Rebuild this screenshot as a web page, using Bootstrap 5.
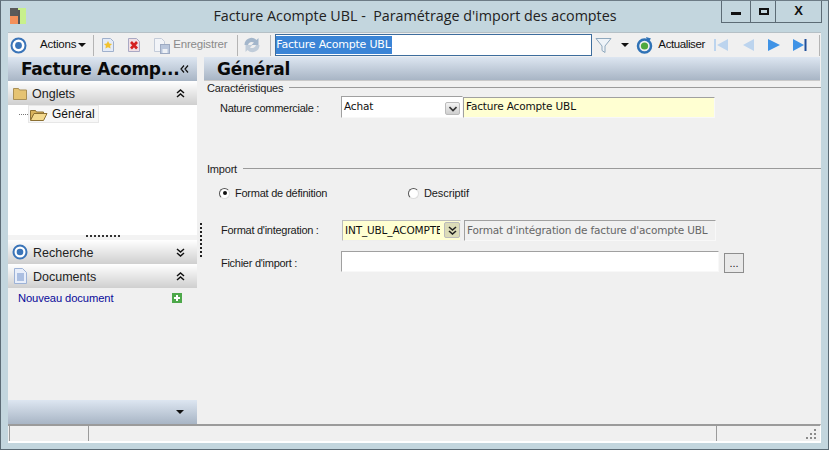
<!doctype html>
<html lang="fr"><head><meta charset="utf-8"><title>Facture Acompte UBL</title>
<link rel="stylesheet" href="https://cdn.jsdelivr.net/npm/bootstrap@5.3.0/dist/css/bootstrap.min.css">
<style>
html,body{margin:0;height:450px;overflow:hidden;background:#c3d6de}
body{font:12px/1 "Liberation Sans",Arial,sans-serif;color:#111}
.win{width:829px;height:450px;background:#c3d6de;border:1px solid #5c6b75;border-top-color:#6d7c86;padding:0 7px 6px;position:relative}
.ttl{height:31px;flex:none}
.ttl-logo{width:16px;height:16px;margin:7px 0 0 2px;flex:none}
.ttl-text{flex:1;text-align:center;font:14.3px/1 "Open Sans",sans-serif;color:#222;padding-top:8px;margin-right:17px}
.ctrl{position:absolute;top:0;right:6px;height:22px;width:101px;background:#c3d6de;border:1px solid #5c6b75;border-top:0}
.ctrl>div{flex:1;border-left:1px solid #5c6b75;font:bold 13px/20px "Liberation Sans",sans-serif;text-align:center;position:relative}
.ctrl>div:first-child{border-left:0;flex:0 0 28px}
.ctrl>div:nth-child(2){flex:0 0 25px}
.c-min{display:block;width:10px;height:3px;background:#111;position:absolute;left:9px;top:11px}
.c-max{display:block;width:10px;height:7px;border:2px solid #111;position:absolute;left:8px;top:7px}
.tbar{height:25px;background:#f0f0f0;flex:none;padding-left:2px;border-top:1px solid #b5c0c6;font-size:11.5px;letter-spacing:-.2px}
.tbar>*{flex:none}
.tsep{width:1px;height:21px;background:#b4b4b4}
.g2{margin-left:2px}.g3{margin-left:3px}.g4{margin-left:4px}.g5{margin-left:5px}.g7{margin-left:7px}.g8{margin-left:8px}.g9{margin-left:9px}.g10{margin-left:10px}.g11{margin-left:11px}.g12{margin-left:12px}.g13{margin-left:13px}
.dim{color:#8a8a8a}
.act{letter-spacing:-.4px}
.sel-input{width:317px;height:22px;border:1px solid #3d6d9d;background:#fff;padding:1px 0 0 0;font:11px/1 "DejaVu Sans",sans-serif;letter-spacing:-.2px}
.sel-input span{background:#3a84d6;color:#fff;display:inline-block;line-height:18px;padding-right:1px}
.bodyy{flex:1;min-height:0;background:#f0f0f0}
.lp{width:189px;flex:none;background:#f0f0f0}
.band{height:24px;flex:none;background:linear-gradient(#dde6f1,#a8b5c5);position:relative}
.band-t{font:bold 17px/24px "DejaVu Sans",sans-serif;color:#0a0a0a;white-space:nowrap;letter-spacing:-.25px}
.left-t{padding-left:13px}
.coll{position:absolute;right:8px;top:8px}
.bar{height:24px;flex:none;background:linear-gradient(#fff,#cfcfcf);font:12.5px/22px "Liberation Sans",sans-serif;padding-left:5px;color:#222}
.bar>span{padding-top:2px}
.ic{margin-right:5px;flex:none}
.ic-r{margin-right:5px;margin-left:-1px}
.ic-d{margin-left:1px;margin-right:6px}
.chev{margin-left:auto;margin-right:12px;flex:none}
.tree{height:130px;background:#fff;flex:none;padding:0 0 0 11px;font-size:12px}
.tline{width:9px;border-top:1px dotted #777;margin-top:9px}
.node{border:1px solid #e7e7e7;background:#f7f7f7;height:18px;padding-right:3px}
.nic{margin-right:4px;margin-left:1px}
.grip{height:5px;background:#f3f3f3;flex:none;position:relative}
.grip i{position:absolute;left:78px;top:0;width:34px;height:2px;background:repeating-linear-gradient(90deg,#333 0 2px,transparent 2px 4px)}
.docs{flex:1;padding:5px 15px 0 10px;color:#0a0a9a;font-size:11.2px;letter-spacing:-.1px}
.spl{width:7px;flex:none;background:#f0f0f0;position:relative}
.spl i{position:absolute;left:3px;top:166px;height:34px;width:2px;background:repeating-linear-gradient(#222 0 2px,transparent 2px 4px)}
.rp{flex:1;min-width:0;background:#f0f0f0}
.head2{border-bottom:1px solid #c9c9c9;margin-right:1px}
.head2 .band-t{padding-left:13px}
.frm{padding:0 0 0 3px;font-size:11px;color:#1a1a1a}
.lg{height:13px;margin-top:1px;line-height:13px;color:#222;letter-spacing:-.2px;white-space:nowrap}
.lg hr{flex:1;margin:0 0 2px 6px;border:0;border-top:1px solid #9a9a9a;opacity:1}
.lg-imp{margin-top:45px}
.fl{width:134px;padding-left:13px;flex:none;white-space:nowrap;letter-spacing:-.27px}
.fl-n{padding-top:3px}
.fl-f{width:135px;padding-left:14px}
.fl-i{padding-left:14px;padding-top:7px}
.inp{height:21px;border:1px solid #a0a0a0;border-right-color:#f8f8f8;border-bottom-color:#f8f8f8;font:10.5px/17px "DejaVu Sans",sans-serif;padding:0 2px;overflow:hidden;white-space:nowrap;flex:none;color:#111;letter-spacing:-.15px}
.wh{background:#fff}.ye{background:#ffffd2}.gr{background:#f0f0f0;color:#666;letter-spacing:-.16px}
.w-ach{width:122px;height:22px;padding-top:1px}
.w-fac{width:252px}
.w-fmt{width:119px;padding-top:1px;border-color:#bbb #eee #eee #bbb}
.clip{display:block;width:95px;overflow:hidden}
.w-des{width:252px;margin-left:3px;padding-top:1px}
.w-fic{width:378px}
.r1{margin-top:1px}.r2{margin-top:20px}.r3{margin-top:10px}
.cbtn{position:absolute;right:2px;top:5px;width:15px;height:13px;background:linear-gradient(#f3f3f3,#cfcfcf);border:1px solid #bbb;border-radius:2px}
.cbtn2{top:1px;height:16px;width:16px;right:0;background:#dcdcb8}
.rel{position:relative}
.rrow{margin-top:10px;padding-left:12px;height:14px}
.rd{width:11px;height:11px;border-radius:50%;background:#fff;border:1px solid #555;border-right-color:#ddd;border-bottom-color:#ddd;flex:none;position:relative}
.rd.on::after{content:"";position:absolute;left:2.5px;top:2.5px;width:4px;height:4px;border-radius:50%;background:#111}
.rlab{letter-spacing:-.1px;margin-left:5px}
.rlab1{width:173px;margin-left:5px;letter-spacing:-.25px}
.dots{width:20px;height:20px;background:#e9e9e9;border:1px solid #8d8d8d;text-align:center;font-size:11px;line-height:18px;flex:none;margin-left:5px;margin-top:2px}
.sb{height:19px;flex:none;background:#f0f0f0;border-top:2px solid #9b9b9b;border-bottom:2px solid #fff;border-right:1px solid #fff;position:relative}
.sb div{border-left:1px solid #9b9b9b;height:15px}
.sb1{width:79px;margin-left:1px}
.sb2{width:628px}
.gripp{position:absolute;right:3px;bottom:1px;width:11px;height:11px}
</style></head>
<body>
<div class="win d-flex flex-column">
  <div class="ttl d-flex">
    <svg class="ttl-logo" viewBox="0 0 16 16"><rect x="0" y="0" width="8" height="8" fill="#5a5a5a"/><rect x="0" y="8" width="8" height="8" fill="#f4905a"/><rect x="8" y="0" width="8" height="16" fill="#c8f08c"/><rect x="8" y="2" width="2" height="14" fill="#555"/></svg>
    <div class="ttl-text">Facture Acompte UBL -&nbsp; Paramétrage d'import des acomptes</div>
    <div class="ctrl d-flex"><div><span class="c-min"></span></div><div><span class="c-max"></span></div><div>X</div></div>
  </div>
  <div class="tbar d-flex align-items-center">
    <svg width="17" height="17" viewBox="0 0 17 17"><circle cx="8.500" cy="8.500" r="7" fill="#fff" stroke="#3a74b8" stroke-width="2"/><circle cx="8.500" cy="8.500" r="3.400" fill="#3a74b8"/></svg>
    <span class="g13">Actions</span>
    <svg width="8" height="5" class="g2"><path d="M0 0h8L4 4z" fill="#111"/></svg>
    <span class="tsep g7"></span>
    <svg width="14" height="16" viewBox="0 0 14 16" class="g7"><path d="M1.500 1.500h8l3 3v10h-11z" fill="#e4ebf7" stroke="#9fb0cc"/><path d="M7 4l1.300 2.600 2.800.3-2 1.900.5 2.800L7 10.300l-2.600 1.300.5-2.800-2-1.900 2.800-.3z" fill="#f2c230"/></svg>
    <svg width="14" height="16" viewBox="0 0 14 16" class="g12"><path d="M1.500 1.500h8l3 3v10h-11z" fill="#f0dfe4" stroke="#a9a9c4"/><path d="M4 5l6 6.500M10 5l-6 6.500" stroke="#d42020" stroke-width="2.600"/></svg>
    <svg width="17" height="17" viewBox="0 0 17 17" class="g12"><path d="M1.500 1.500h7l3 3v10h-10z" fill="#f2f4f8" stroke="#c3cbd8"/><rect x="7.500" y="7.500" width="9" height="9" fill="#b9c6dc" stroke="#9daac2"/><rect x="9.500" y="12" width="5" height="4" fill="#eef1f6"/></svg>
    <span class="dim g3">Enregistrer</span>
    <span class="tsep g10"></span>
    <svg width="18" height="18" viewBox="0 0 18 18" class="g5"><path d="M1.500 9a7 7 0 0 1 12-5l2-2v7h-7l2.500-2.500A4 4 0 0 0 5 9z" fill="#a3b6cb"/><path d="M16.500 9a7 7 0 0 1-12 5l-2 2V9h7L7 11.500A4 4 0 0 0 13 9z" fill="#c0ccd9"/></svg>
    <span class="tsep g9"></span>
    <div class="sel-input g4"><span>Facture Acompte UBL</span></div>
    <svg width="17" height="17" viewBox="0 0 17 17" class="g3"><path d="M1 1.500h15L10 9v6.500L7 13.500V9z" fill="#eef3f8" stroke="#8fa8bd"/></svg>
    <svg width="8" height="5" class="g9"><path d="M0 0h8L4 4z" fill="#111"/></svg>
    <svg width="17" height="17" viewBox="0 0 17 17" class="g7"><circle cx="8.500" cy="9" r="6.500" fill="none" stroke="#2f72b6" stroke-width="2.500"/><circle cx="8.500" cy="9" r="3.600" fill="#4fa83d"/><path d="M10 0l5 1.500-3 4z" fill="#2f72b6"/></svg>
    <span class="g5 act">Actualiser</span>
    <svg width="16" height="16" viewBox="0 0 16 16" class="g8"><rect x="1" y="2" width="2" height="12" fill="#bcd4ee"/><path d="M15 2v12L4 8z" fill="#bcd4ee"/></svg>
    <svg width="14" height="16" viewBox="0 0 14 16" class="g12"><path d="M13 2v12L2 8z" fill="#bcd4ee"/></svg>
    <svg width="14" height="16" viewBox="0 0 14 16" class="g12"><path d="M1 2v12l12-6z" fill="#3f93e6"/></svg>
    <svg width="16" height="16" viewBox="0 0 16 16" class="g11"><path d="M1 2v12l11-6z" fill="#3f93e6"/><rect x="12.500" y="2" width="2" height="12" fill="#1f4f9a"/></svg>
    <span class="tsep g11"></span>
  </div>
  <div class="bodyy d-flex">
    <div class="lp d-flex flex-column">
      <div class="band d-flex"><div class="band-t left-t flex-grow-1">Facture Acomp...</div><svg class="coll" width="9" height="8" viewBox="0 0 9 8"><path d="M4 .5L1 4l3 3.500M8 .5L5 4l3 3.500" fill="none" stroke="#111" stroke-width="1.200"/></svg></div>
      <div class="bar d-flex align-items-center">
        <svg class="ic" width="14" height="13" viewBox="0 0 14 13"><path d="M.5 1.500h5l1 1.500h7v9.500H.5z" fill="#e5c372" stroke="#a98f55"/></svg><span>Onglets</span>
        <svg class="chev" width="9" height="9" viewBox="0 0 9 9"><path d="M1 4l3.500-3L8 4M1 8l3.500-3L8 8" fill="none" stroke="#111" stroke-width="1.500"/></svg>
      </div>
      <div class="tree d-flex align-items-start">
        <span class="tline"></span>
        <div class="node d-flex align-items-center"><svg width="18" height="13" viewBox="0 0 18 13" class="nic"><path d="M.5 2.500h5l1 1.500h7v2H4l-3.500 6z" fill="#d9b35c" stroke="#8c7033"/><path d="M4 5.500h13l-3.500 7H.5z" fill="#f3d98e" stroke="#8c7033"/></svg><span>Général</span></div>
      </div>
      <div class="grip"><i></i></div>
      <div class="bar d-flex align-items-center">
        <svg class="ic ic-r" width="16" height="16" viewBox="0 0 16 16"><circle cx="8" cy="8" r="6.500" fill="#fff" stroke="#3a74b8" stroke-width="2"/><circle cx="8" cy="8" r="3.300" fill="#3a74b8"/></svg><span>Recherche</span>
        <svg class="chev" width="9" height="9" viewBox="0 0 9 9"><path d="M1 1l3.500 3L8 1M1 5l3.500 3L8 5" fill="none" stroke="#111" stroke-width="1.500"/></svg>
      </div>
      <div class="bar d-flex align-items-center">
        <svg class="ic ic-d" width="13" height="16" viewBox="0 0 13 16"><path d="M.5.500h8l4 4v11H.5z" fill="#e8eefa" stroke="#9db2d6"/><path d="M3 6h7M3 8h7M3 10h7M3 12h7" stroke="#6f8fc8"/></svg><span>Documents</span>
        <svg class="chev" width="9" height="9" viewBox="0 0 9 9"><path d="M1 4l3.500-3L8 4M1 8l3.500-3L8 8" fill="none" stroke="#111" stroke-width="1.500"/></svg>
      </div>
      <div class="docs d-flex justify-content-between">
        <span>Nouveau document</span>
        <svg width="10" height="10" viewBox="0 0 10 10"><rect width="10" height="10" fill="#4da84a"/><path d="M5 2v6M2 5h6" stroke="#fff" stroke-width="2"/></svg>
      </div>
      <div class="band d-flex align-items-center justify-content-end pe-2"><svg width="9" height="5" class="me-1"><path d="M0 0h8L4 4z" fill="#111"/></svg></div>
    </div>
    <div class="spl"><i></i></div>
    <div class="rp d-flex flex-column">
      <div class="band head2"><div class="band-t">Général</div></div>
      <div class="frm flex-grow-1">
        <div class="lg d-flex align-items-center"><span>Caractéristiques</span><hr></div>
        <div class="d-flex align-items-center r1">
          <div class="fl fl-n">Nature commerciale :</div>
          <div class="inp wh rel w-ach">Achat<span class="cbtn d-flex align-items-center justify-content-center"><svg width="8" height="6" viewBox="0 0 8 6"><path d="M.5 1l3.500 3.500L7.500 1" fill="none" stroke="#333" stroke-width="1.600"/></svg></span></div>
          <div class="inp ye w-fac">Facture Acompte UBL</div>
        </div>
        <div class="lg lg-imp d-flex align-items-center"><span>Import</span><hr></div>
        <div class="rrow d-flex align-items-center">
          <span class="rd on"></span><span class="rlab1">Format de définition</span>
          <span class="rd"></span><span class="rlab">Descriptif</span>
        </div>
        <div class="d-flex align-items-center r2">
          <div class="fl fl-f">Format d'integration :</div>
          <div class="inp ye rel w-fmt"><span class="clip">INT_UBL_ACOMPTE</span><span class="cbtn cbtn2 d-flex align-items-center justify-content-center"><svg width="9" height="9" viewBox="0 0 9 9"><path d="M1 1l3.500 3L8 1M1 5l3.500 3L8 5" fill="none" stroke="#222" stroke-width="1.600"/></svg></span></div>
          <div class="inp gr w-des">Format d'intégration de facture d'acompte UBL</div>
        </div>
        <div class="d-flex align-items-start r3">
          <div class="fl fl-i">Fichier d'import :</div>
          <div class="inp wh w-fic"></div>
          <div class="dots">...</div>
        </div>
      </div>
    </div>
  </div>
  <div class="sb d-flex">
    <div class="sb1"></div>
    <div class="sb2"></div>
    <div class="flex-grow-1"></div>
    <svg class="gripp" viewBox="0 0 11 11"><path d="M8 0h2v2H8zM8 4h2v2H8zM4 4h2v2H4zM8 8h2v2H8zM4 8h2v2H4zM0 8h2v2H0z" fill="#8a8a8a"/></svg>
  </div>
</div>
</body></html>
